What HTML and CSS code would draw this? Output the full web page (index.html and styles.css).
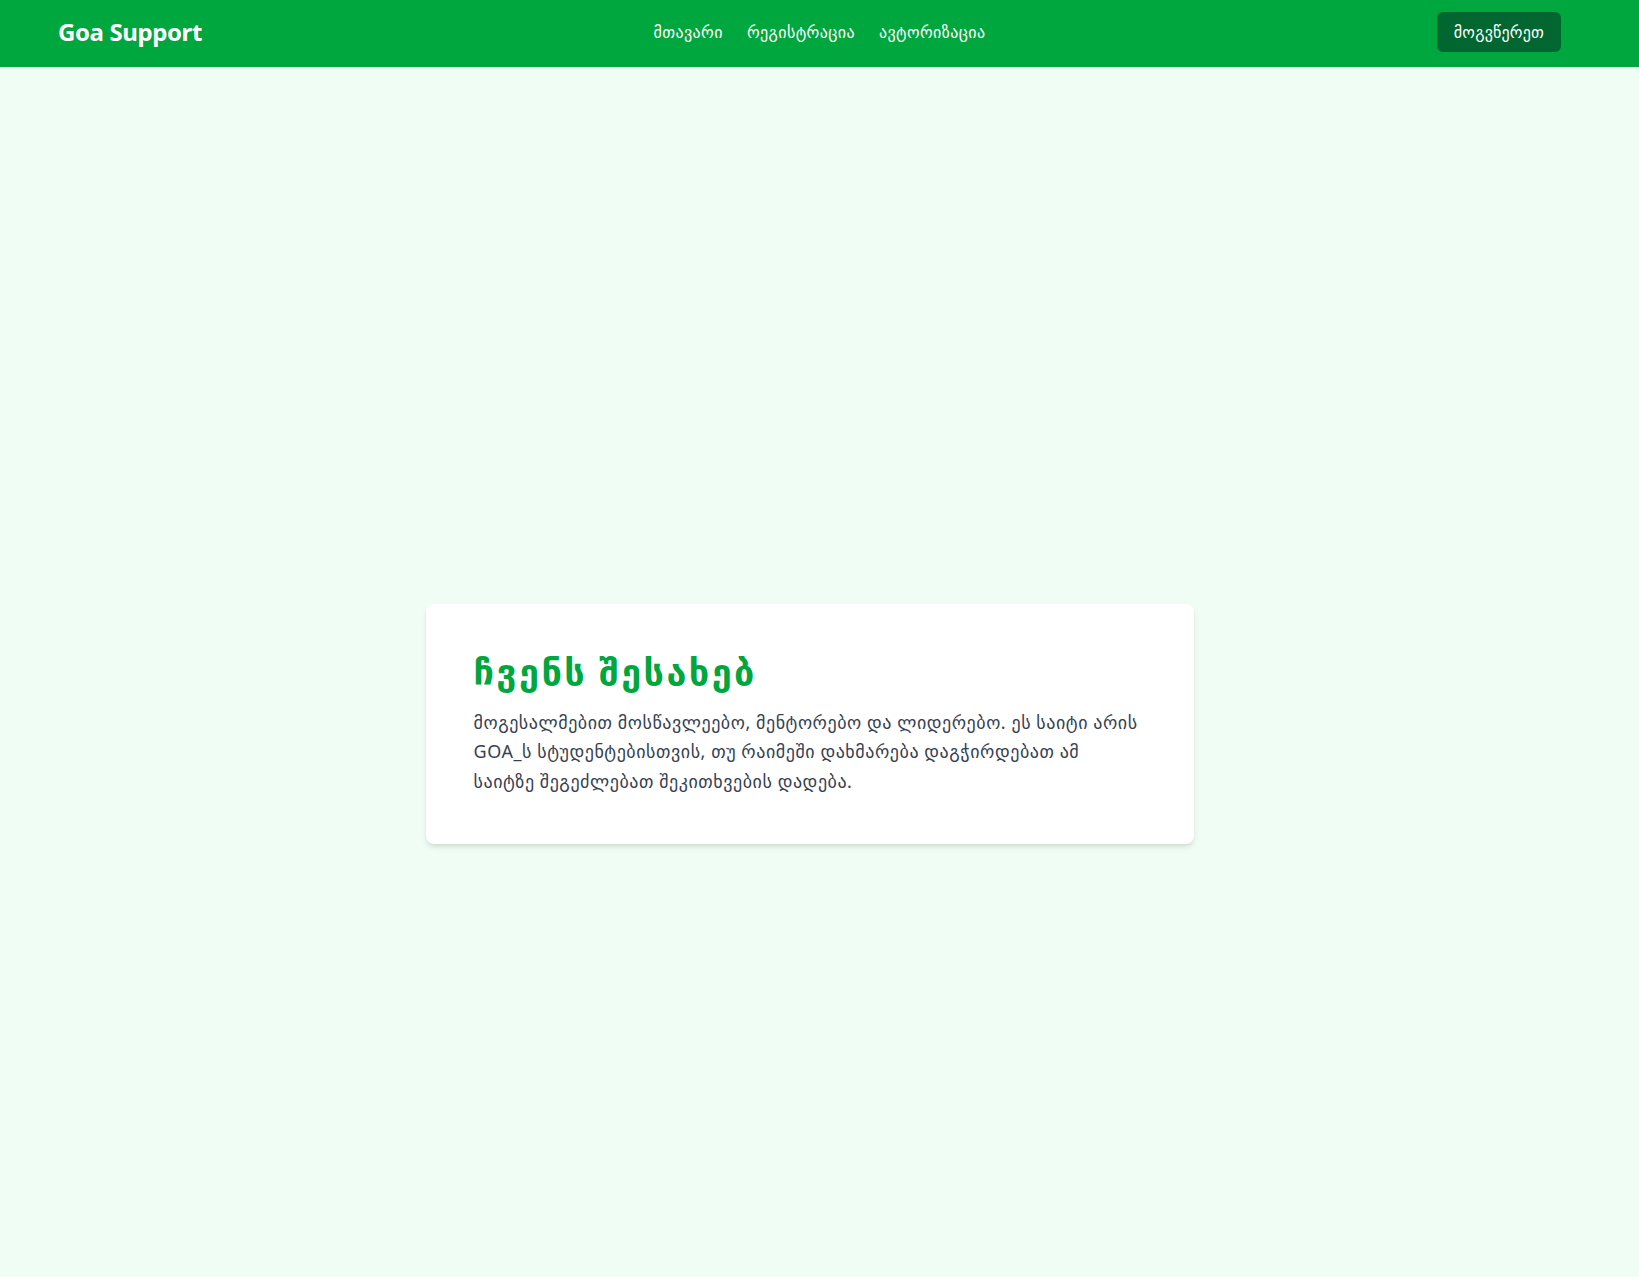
FILE: index.html
```html
<!DOCTYPE html>
<html lang="ka">
<head>
<meta charset="utf-8">
<title>Goa Support</title>
<link rel="stylesheet" href="styles.css">
</head>
<body>
<header class="topbar">
  <div class="brand">Goa Support</div>
  <nav class="nav">
    <a href="#">მთავარი</a>
    <a href="#">რეგისტრაცია</a>
    <a href="#">ავტორიზაცია</a>
  </nav>
  <a class="contact-btn" href="#">მოგვწერეთ</a>
</header>
<main class="main">
  <section class="card">
    <h1 class="card-title">ჩვენს შესახებ</h1>
    <p class="card-text">მოგესალმებით მოსწავლეებო, მენტორებო და ლიდერებო. ეს საიტი არის GOA_ს სტუდენტებისთვის, თუ რაიმეში დახმარება დაგჭირდებათ ამ საიტზე შეგეძლებათ შეკითხვების დადება.</p>
  </section>
</main>
</body>
</html>
```

FILE: styles.css
```css
* { box-sizing: border-box; }
html, body { margin: 0; padding: 0; }
body {
  background: #f0fdf4;
  font-family: "Noto Sans", "DejaVu Sans", sans-serif;
  min-height: 1277px;
}
.topbar {
  background: #00a63e;
  height: 67px;
  display: flex;
  align-items: center;
  justify-content: space-between;
  padding: 0 78px 4px 58px;
}
.brand {
  color: #fff;
  font-weight: 700;
  font-size: 24px;
  letter-spacing: -0.4px;
}
.nav {
  display: flex;
  gap: 24px;
}
.nav a {
  color: #fff;
  text-decoration: none;
  font-size: 16px;
  letter-spacing: 0.4px;
}
.contact-btn {
  background: #016630;
  color: #fff;
  text-decoration: none;
  font-size: 16px;
  letter-spacing: 0.2px;
  height: 40px;
  width: 124px;
  display: flex;
  align-items: center;
  justify-content: center;
  border-radius: 6px;
}
.main {
  padding: 537px 20px 0 0;
  display: flex;
  justify-content: center;
}
.card {
  width: 768px;
  background: #fff;
  border-radius: 8px;
  box-shadow: 0 4px 6px -1px rgba(0,0,0,0.1), 0 2px 4px -2px rgba(0,0,0,0.1);
  padding: 48px;
}
.card-title {
  margin: 0 0 16px;
  color: #00a63e;
  font-size: 36px;
  line-height: 40px;
  font-weight: 700;
  letter-spacing: 2.4px;
}
.card-text {
  margin: 0;
  color: #364153;
  font-size: 18px;
  line-height: 29.25px;
  letter-spacing: 0.55px;
}
```
